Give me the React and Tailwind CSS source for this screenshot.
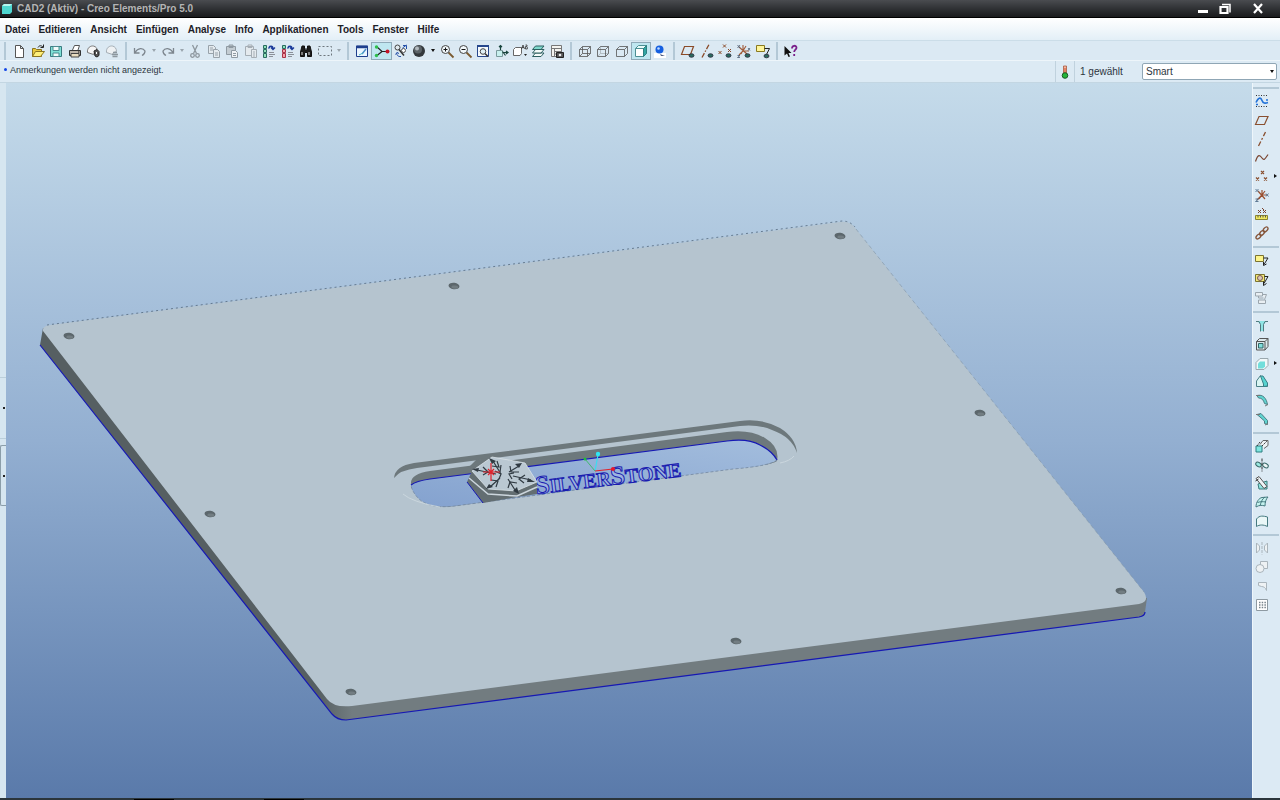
import React from 'react';

const icons = {
    new: <path d="M4.5 2.5h5l3 3v9h-8zM9.5 2.5v3h3" fill="#fff" stroke="#555" />,
    open: (
        <>
            <path d="M2.5 13.5v-8h3l1 1h5v7z" fill="#e9c93c" stroke="#8a7420" />
            <path d="M2.5 13.5l3-5h9l-4 5z" fill="#fff07a" stroke="#8a7420" />
            <path d="M8 4.5c1-2 3-2.5 5-.5M13.5 1.500v3h-3" fill="none" stroke="#222" />
        </>
    ),
    save: (
        <>
            <path d="M2.5 3.5h11v10h-11z" fill="#7fe0d6" stroke="#3a7a80" />
            <path d="M5 3.5h6v4H5zM5 10h6v3.500H5z" fill="#f2fbfb" stroke="#4a8a90" />
        </>
    ),
    print: (
        <>
            <path d="M5.5 7l2-4.500h5L11 7" fill="#fff" stroke="#555" />
            <path d="M2.5 7.5h11v5h-11z" fill="#bdb5aa" stroke="#333" />
            <path d="M4 10.5h8v3.500H4z" fill="#e8dcc0" stroke="#444" />
            <path d="M11 9h1.500" stroke="#111" />
        </>
    ),
    preview: (
        <>
            <path d="M2.5 9.5c-1-8 10-9 10-1l-3 1-1 2z" fill="#f5f5f5" stroke="#777" />
            <path d="M9 8l3-1.500 2 2v4l-2 1.500-2-1z" fill="#555" stroke="#222" />
            <path d="M11.5 9v2" stroke="#fff" />
        </>
    ),
    send: (
        <>
            <path d="M2.5 9.5c-1-8 10-9 10-1l-3 1-1 2z" fill="#eef1f3" stroke="#a5aeb5" />
            <path d="M8 11.5h6M8.5 13.5h5M9 9.5h4" stroke="#8d979e" strokeWidth="1.300" />
        </>
    ),
    undo: <path d="M2.5 5v5h5M3 9.5c3-5 8-5 10-1.500 0 2-1 3.500-3 4.500" fill="none" stroke="#7d868e" strokeWidth="1.300" />,
    redo: <path d="M13.5 5v5h-5M13 9.5c-3-5-8-5-10-1.500 0 2 1 3.500 3 4.500" fill="none" stroke="#7d868e" strokeWidth="1.300" />,
    cut: (
        <g fill="none" stroke="#8d979e" strokeWidth="1.300">
            <path d="M5.5 2l4 8.500M10.5 2l-4 8.500" />
            <circle cx="5.500" cy="12.500" r="1.800" />
            <circle cx="10.500" cy="12.500" r="1.800" />
        </g>
    ),
    copy: (
        <g fill="#e4eaee" stroke="#98a2aa">
            <path d="M2.5 2.5h5l2 2v6h-7zM4 5h3M4 7h3" />
            <path d="M7.5 6.5h4l2 2v6h-6zM9 10h3M9 12h3" />
        </g>
    ),
    paste: (
        <g fill="#c3ccd2" stroke="#8f9aa2">
            <path d="M2.5 3.5h9v8h-9zM5 2h4v2.500H5z" />
            <path d="M7.5 7.5h4l2 2v5h-6zM9 10.5h3M9 12.5h3" fill="#f0f3f5" />
        </g>
    ),
    pasteSpecial: (
        <g fill="#e4eaee" stroke="#a5aeb5">
            <path d="M2.5 3.5h8v9h-8zM5 2h4v2.500H5z" />
            <path d="M8.5 6.5h5v8h-5zM10 9h2M10 11h2M10 13h2" />
        </g>
    ),
    regen: (
        <>
            <path d="M2.5 2.5h3v3h-3zM2.5 6.5h3v3h-3zM2.5 10.5h3v4h-3z" fill="#8fe0b8" stroke="#286b60" />
            <path d="M8 5.5c0-3 4-3 4 0M10 4.5l2 2 2-2M9 3l-1.500 2.500" fill="none" stroke="#1a3a9a" strokeWidth="1.300" />
            <path d="M8 9.5h5M8 11.5h6M8 13.5h4" stroke="#8a9098" />
        </>
    ),
    regenManager: (
        <>
            <path d="M2.5 2.5h3v3h-3z" fill="#8fe0b8" stroke="#286b60" />
            <path d="M2.5 6.5h3v3h-3zM2.5 10.5h3v4h-3z" fill="#f4a0a8" stroke="#a83248" />
            <path d="M8 5.5c0-3 4-3 4 0M10 4.5l2 2 2-2M9 3l-1.500 2.500" fill="none" stroke="#1a3a9a" strokeWidth="1.300" />
            <path d="M8 9.5h5M8 11.5h6M8 13.5h4" stroke="#8a9098" />
        </>
    ),
    find: (
        <>
            <path d="M4 3h2.500v2H7v2h2V5h.5V3H12l1.500 6v4.500h-4V9.500h-3v4h-4V9z" fill="#1c1c1c" stroke="#111" />
            <path d="M4 9v3M11 9v3" stroke="#ddd" />
        </>
    ),
    selectBox: <path d="M1.5 3.5h13v9h-13z" fill="none" stroke="#6d767d" strokeDasharray="2 2" />,
    repaint: (
        <>
            <path d="M2.5 3h11v10.500h-11z" fill="#eaf6ff" stroke="#1d3e8c" />
            <path d="M2 4h12" stroke="#1d3e8c" strokeWidth="2.500" />
            <path d="M12 6l-4 5" stroke="#4a90c8" strokeWidth="1.500" />
            <path d="M5 12l4-2" stroke="#47b4c4" />
        </>
    ),
    spin: (
        <>
            <path d="M3 4l5 4.500h6M8 8.5l-5 4" fill="none" stroke="#222" strokeWidth="1.200" />
            <circle cx="2.500" cy="4" r="1.700" fill="#2cbf4a" />
            <circle cx="2.500" cy="12.500" r="1.700" fill="#2cbf4a" />
            <circle cx="13.500" cy="8.500" r="2" fill="#c41528" />
        </>
    ),
    orient: (
        <>
            <circle cx="4.500" cy="4.500" r="2.500" fill="#dfe8ee" stroke="#444" />
            <path d="M6 6.5l5 6" stroke="#333" strokeWidth="1.500" />
            <circle cx="10.500" cy="7.500" r="2" fill="#fff" stroke="#555" />
            <path d="M10 2.5h3.500V6M9.500 5l4-3M4 9.500c-1 2 1 4.500 4 4M6 10.5l-2-1-1.500 2" stroke="#244fa8" fill="none" />
        </>
    ),
    shadeBall: (
        <>
            <circle cx="8" cy="8" r="6" fill="#33383c" />
            <circle cx="7" cy="6.500" r="4" fill="#5c6368" />
            <circle cx="6" cy="5.500" r="2" fill="#b3babf" />
        </>
    ),
    zoomIn: (
        <>
            <path d="M9.5 9.5l5 5" stroke="#7a5a30" strokeWidth="1.800" />
            <circle cx="6.500" cy="6.500" r="4" fill="#f1f8fb" stroke="#444" />
            <path d="M4.5 6.5h4M6.5 4.5v4" stroke="#111" />
        </>
    ),
    zoomOut: (
        <>
            <path d="M9.5 9.5l5 5" stroke="#7a5a30" strokeWidth="1.800" />
            <circle cx="6.500" cy="6.500" r="4" fill="#f1f8fb" stroke="#444" />
            <path d="M4.5 6.5h4" stroke="#111" />
        </>
    ),
    refit: (
        <>
            <path d="M2.5 2.5h11v11h-11z" fill="#f4f9fc" stroke="#26478c" />
            <path d="M2 3h12" stroke="#26478c" strokeWidth="2" />
            <path d="M10 10.5l3 3" stroke="#333" strokeWidth="1.500" />
            <circle cx="8" cy="8.500" r="2.800" fill="#dff0f5" stroke="#444" />
        </>
    ),
    reorient: (
        <>
            <path d="M2.5 7.5h6v6h-6z" fill="#c8f0ee" stroke="#7a9a9c" />
            <path d="M6.5 7V2.500M5 4l1.500-1.500L8 4M8.5 9.5h5M12 8l2 1.500-2 1.500M8.5 8.5l3 4" stroke="#17443c" fill="none" strokeWidth="1.200" />
        </>
    ),
    viewList: (
        <>
            <path d="M1.5 6.5l2-2h6v6l-1.500 2H1.500z" fill="#fff" stroke="#666" />
            <path d="M9.5 6l1.500-4 1.500 4M10 4.5h2M13.5 2h1.500v1.500h-1.500V6h1.800V4" stroke="#333" fill="none" strokeWidth=".8" />
            <path d="M12 11h3l-1.500 2z" fill="#222" />
        </>
    ),
    layers: (
        <g stroke="#2c5f60">
            <path d="M2.5 13.5l3-3.500h8.500l-3 3.500z" fill="#f4fbfa" />
            <path d="M2.5 10l3-3.500h8.500l-3 3.500z" fill="#f4fbfa" />
            <path d="M2.5 6.5l3-3.500h8.500l-3 3.500z" fill="#7fd8cc" />
        </g>
    ),
    viewManager: (
        <>
            <path d="M2.5 2.5h10v11h-10zM2.5 5.5h10M5.5 5.5v8M5.5 8.5h7M5.5 11h7" fill="#f4f4f0" stroke="#777" />
            <path d="M7.5 9.5h7v5h-7z" fill="#555" stroke="#222" />
            <circle cx="11" cy="12" r="1.300" fill="#eee" />
        </>
    ),
    wireframe: <path d="M2.5 6.5h8v7h-8zM5.5 3.5h8v7h-8zM2.5 6.5l3-3M10.5 6.5l3-3M10.5 13.5l3-3M2.5 13.5l3-3" fill="none" stroke="#555" strokeWidth=".8" />,
    hiddenLine: (
        <g fill="none" strokeWidth=".8">
            <path d="M5.5 3.5v7h8M2.5 13.5l3-3" stroke="#a9b2b8" />
            <path d="M2.5 6.5h8v7h-8zM2.5 6.5l3-3h8v7l-3 3M10.5 6.5l3-3" stroke="#555" />
        </g>
    ),
    noHidden: <path d="M2.5 6.5h8v7h-8zM2.5 6.5l3-3h8v7l-3 3M10.5 6.5l3-3" fill="none" stroke="#555" strokeWidth=".8" />,
    shaded: (
        <>
            <path d="M2.5 5.5h8v8h-8z" fill="#fff" stroke="#4c8f94" />
            <path d="M2.5 5.5l3-3h8l-3 3z" fill="#e6fbfa" stroke="#4c8f94" />
            <path d="M10.5 5.5l3-3v8l-3 3z" fill="#31a5a2" stroke="#2c7f80" />
        </>
    ),
    enhanced: (
        <>
            <path d="M2 10h12v5H2z" fill="#fff" />
            <path d="M8 11l5 2H9z" fill="#4d5c80" />
            <circle cx="7.500" cy="6.500" r="4" fill="#155fe0" />
            <circle cx="6.500" cy="5.500" r="1.300" fill="#bcd8ff" />
        </>
    ),
    planeShow: (
        <>
            <path d="M1.5 11.5l3-8h9l-3 8z" fill="none" stroke="#8a4a28" strokeWidth="1.200" />
            <ellipse cx="11.500" cy="12.500" rx="2.500" ry="1.800" fill="#2b6b60" stroke="#223" strokeWidth=".8" />
        </>
    ),
    axisShow: (
        <>
            <path d="M3 14.5L10 1.500" stroke="#8a4a28" strokeWidth="1.300" strokeDasharray="5 1.500 1.500 1.500" />
            <ellipse cx="11.500" cy="12.500" rx="2.500" ry="1.800" fill="#2b6b60" stroke="#223" strokeWidth=".8" />
        </>
    ),
    pointShow: (
        <>
            <path d="M6 1.5l3 3m0-3l-3 3M1.5 8l3 3m0-3l-3 3M11 6l3 3m0-3l-3 3" stroke="#8a4a28" />
            <ellipse cx="11.500" cy="12.500" rx="2.500" ry="1.800" fill="#2b6b60" stroke="#223" strokeWidth=".8" />
        </>
    ),
    csysShow: (
        <>
            <path d="M7 8V2M7 8h6M7 8l-4 4M3 4l8 7M10 3l-5 8" stroke="#a05a38" strokeWidth="1.100" />
            <path d="M1.5 2l2.500 3m0-3L1.500 5M12 5l2 2.500M14 5l-2 2.500M1.5 12.5h2.500l-2.500 2h2.500" stroke="#4a5a70" fill="none" strokeWidth=".8" />
            <ellipse cx="11.500" cy="12.500" rx="2.500" ry="1.800" fill="#2b6b60" stroke="#223" strokeWidth=".8" />
        </>
    ),
    noteShow: (
        <>
            <path d="M1.5 2.5h8v6h-8z" fill="#fff59a" stroke="#8a7a20" />
            <path d="M9.5 5.5h5l-3 6" stroke="#222" fill="none" />
            <ellipse cx="11.500" cy="13" rx="2.500" ry="1.800" fill="#2b6b60" stroke="#223" strokeWidth=".8" />
        </>
    ),
    whatsThis: (
        <>
            <path d="M1.5 3v9.500l2.500-2 1.500 3.500 1.500-.5-1.500-3.500h3z" fill="#111" />
            <path d="M9 5.5c0-3.500 4.500-3.500 4.500-.8 0 2-2.300 2-2.300 4.300M11.2 11v2" stroke="#7a1f8a" fill="none" strokeWidth="1.800" />
        </>
    ),
    sketch: (
        <>
            <path d="M2 2.5h12M2 13.5h12" stroke="#333" strokeDasharray="1 1.500" />
            <path d="M2 9.5c3-6 5-5 6-2s3 3 6 2M2 11.5h2M12 7h2" fill="none" stroke="#2272d8" strokeWidth="1.600" />
        </>
    ),
    plane: <path d="M1.5 12.5l3.500-8h9l-3.500 8z" fill="none" stroke="#8a5030" strokeWidth="1.200" />,
    axis: <path d="M4.5 15L11.500 1" stroke="#8a5030" strokeWidth="1.300" strokeDasharray="5 2 2 2" />,
    curve: <path d="M1.5 11.5C4 3.500 6 5 8 8s3 1 6-3.500" fill="none" stroke="#7a4530" strokeWidth="1.200" />,
    points: <path d="M7 3l3 3m0-3L7 6M2 9.5l3 3m0-3l-3 3M10 9.5l3 3m0-3l-3 3" stroke="#8a5030" strokeWidth="1.200" />,
    csys: (
        <>
            <path d="M8 3v5l-5 5M8 8h5M4 4l7 8M11 4l-6 8" stroke="#9a5030" fill="none" strokeWidth="1.200" />
            <path d="M1.5 2l3 3m0-3l-3 3M12 6.5l2.500 3m0-3L12 9.500M1.5 12h3l-3 2.500h3" stroke="#52708c" fill="none" strokeWidth=".9" />
        </>
    ),
    analysis: (
        <>
            <path d="M4 4l3 3m0-3L4 7M9 4l3 3m0-3L9 7M8 2l2 2" stroke="#7a4530" />
            <path d="M1.5 9.5h12v4h-12z" fill="#f0e860" stroke="#8a8430" />
            <path d="M4 9.5v2M6.5 9.5v2M9 9.5v2M11.5 9.5v2" stroke="#555" />
        </>
    ),
    reference: (
        <g fill="none" stroke="#85553a" strokeWidth="1.300">
            <ellipse cx="4.500" cy="11.500" rx="3" ry="1.800" transform="rotate(-45 4.500 11.500)" />
            <ellipse cx="8" cy="8" rx="3" ry="1.800" transform="rotate(-45 8 8)" />
            <ellipse cx="11.500" cy="4.500" rx="3" ry="1.800" transform="rotate(-45 11.500 4.500)" />
        </g>
    ),
    note: (
        <>
            <path d="M1.5 3.5h8v6h-8z" fill="#fdf48a" stroke="#7c7430" />
            <path d="M9.5 6h4.500l-4 6.500M9.5 10v3.500l3-1.500" stroke="#222" fill="none" />
        </>
    ),
    noteSurface: (
        <>
            <path d="M1.5 3.5h9v7h-9z" fill="#f2e878" stroke="#7c7430" />
            <circle cx="6" cy="7" r="2.500" fill="#dcc8ba" stroke="#7a5a50" />
            <path d="M10.5 5.5h3.500l-4 7M9.5 10.5v4l3-2" stroke="#222" fill="none" />
        </>
    ),
    noteLinks: <path d="M1.5 2.5h7v3.500h-7zM4.5 10h7v3.500h-7zM8.5 4.5h4l-2 5M4.5 6v2h5" fill="#e9eff3" stroke="#9ba6ae" />,
    hole: (
        <>
            <path d="M3 4h10l-3 3v7H6V7z" fill="#8fe4e4" />
            <path d="M2 4.5h3l1.500 3v7M14 4.5h-3l-1.500 3v7" fill="none" stroke="#527a80" />
        </>
    ),
    shell: (
        <>
            <path d="M2.5 5.5l3-3h8.500v8l-3 3.500H2.500z" fill="#dce9ec" stroke="#555" />
            <path d="M2.5 5.5H11V14M11 5.5l3-3" fill="none" stroke="#555" />
            <path d="M4.5 7.5h4.500V12H4.500z" fill="#80dedb" stroke="#366" />
        </>
    ),
    rib: (
        <>
            <path d="M2 7.5l4-4h8v7l-4 4H2z" fill="#f1f8f9" stroke="#9aa8ae" />
            <path d="M4 8.5l2-2h5v5l-2 2H4z" fill="#72dedb" />
        </>
    ),
    draft: (
        <>
            <path d="M2.5 13.5V8l4-5.500 7 8.500v2.500z" fill="#d9f5f3" stroke="#4b7f86" />
            <path d="M6.5 3l3 8v2.500l4-.5V10L9 3z" fill="#57d4d0" stroke="#3b7f86" />
        </>
    ),
    round: (
        <>
            <path d="M3 3.5c6-1.500 9.500 3 10.500 9l-3-1C9.500 8 8 6 4.500 6z" fill="#60d4d0" stroke="#4b7f86" />
            <path d="M2 3.5h4M11 14l3-1.500" stroke="#777" />
        </>
    ),
    chamfer: (
        <>
            <path d="M3 3.5l4-1 6.500 7v4l-3-1V10L6 6z" fill="#60d4d0" stroke="#4b7f86" />
            <path d="M2 3.5h4M11 14l3-1.500" stroke="#777" />
        </>
    ),
    extrude: (
        <>
            <path d="M6 6.5l3-4h5v5l-4 3" fill="#eef3f5" stroke="#666" />
            <path d="M2 8h6v6H2z" fill="#7fe6e0" stroke="#2d7f80" />
            <path d="M3 8l3-4M8 8l5-5" stroke="#333" strokeDasharray="2 1" />
        </>
    ),
    revolve: (
        <>
            <ellipse cx="4.500" cy="7.500" rx="3" ry="2" transform="rotate(30 4.500 7.500)" fill="#9be8e0" stroke="#3a6a6a" />
            <ellipse cx="11.500" cy="8.500" rx="3" ry="2" transform="rotate(30 11.500 8.500)" fill="#eef5f5" stroke="#3a6a6a" />
            <path d="M8 1.5v13" stroke="#333" strokeDasharray="3 1" />
        </>
    ),
    sweep: (
        <>
            <path d="M4 9l9-3v8H5z" fill="#8fe4df" stroke="#3a7a7a" />
            <path d="M2 3.5l3-2 8 10-3 2z" fill="#eef3f5" stroke="#555" />
            <path d="M1.5 6l3-2" stroke="#333" />
        </>
    ),
    boundary: (
        <>
            <path d="M2 13c0-5 3-9 6-9.500L14 3c-2 2-3 5-3 9-3-1-6-1-9 1z" fill="#c4f2ee" stroke="#467a80" />
            <path d="M6 12c1-4 2-7 5-9M3.5 8.5c3-1 5-1 8.500-.5" fill="none" stroke="#467a80" />
        </>
    ),
    fill: <path d="M2.5 13.5V6c3-4 7-3 11-2v9.500c-4-2-8-2-11 0z" fill="#eaf7f7" stroke="#467a80" />,
    mirror: (
        <g fill="#eef2f4" stroke="#aab5bc">
            <path d="M2.5 3l3 3v4l-3 3zM13.5 3l-3 3v4l3 3z" />
            <path d="M8 2v12.500" strokeDasharray="3 1" />
        </g>
    ),
    merge: (
        <g fill="#eef2f4" stroke="#aab5bc">
            <path d="M6.5 2.5h7v7h-7z" />
            <circle cx="6" cy="9.500" r="4" />
        </g>
    ),
    trim: <path d="M4.5 4.5h8v8c-1-3-3-4-5-4l-3-1z" fill="#eef2f4" stroke="#aab5bc" />,
    pattern: (
        <>
            <path d="M2.5 2.5h11v11h-11z" fill="#fff" stroke="#8e9aa2" />
            <path d="M5 5.5h7M5 8h7M5 10.5h7" stroke="#77838b" strokeWidth="1.500" strokeDasharray="1.500 1.200" />
        </>
    ),
};

const menus = ['Datei', 'Editieren', 'Ansicht', 'Einfügen', 'Analyse', 'Info', 'Applikationen', 'Tools', 'Fenster', 'Hilfe'];

const topGroups = [
    { width: 'w-[111px]', items: ['new', 'open', 'save', 'print', 'preview', 'send'] },
    { width: 'w-[212px]', items: ['undo', 'caretOff', 'redo', 'caretOff', 'cut', 'copy', 'paste', 'pasteSpecial', 'regen', 'regenManager', 'find', 'selectBox', 'caretOff'] },
    { width: 'w-[213px]', items: ['repaint', 'spin', 'orient', 'shadeBall', 'caret', 'zoomIn', 'zoomOut', 'refit', 'reorient', 'viewList', 'layers', 'viewManager'] },
    { width: 'w-[93px]', items: ['wireframe', 'hiddenLine', 'noHidden', 'shaded', 'enhanced'] },
    { width: 'w-[93px]', items: ['planeShow', 'axisShow', 'pointShow', 'csysShow', 'noteShow'] },
    { width: 'w-[18px]', items: ['whatsThis'] },
];

const sideGroups = [
    { height: 'h-[150px]', items: ['sketch', 'plane', 'axis', 'curve', 'points', 'csys', 'analysis', 'reference'] },
    { height: 'h-[56px]', items: ['note', 'noteSurface', 'noteLinks'] },
    { height: 'h-[112px]', items: ['hole', 'shell', 'rib', 'draft', 'round', 'chamfer'] },
    { height: 'h-[93px]', items: ['extrude', 'revolve', 'sweep', 'boundary', 'fill'] },
    { height: 'h-[75px]', items: ['mirror', 'merge', 'trim', 'pattern'] },
];

const pressed = ['spin', 'shaded'];
const flyouts = ['points', 'rib'];

const holes = [
    [69, 336], [454, 286], [840, 236], [980, 413],
    [1121, 591], [736, 641], [351, 692], [210, 514],
];

const Icon = ({ name }) => (
    <svg viewBox="0 0 16 16" className="w-4 h-4 shrink-0" aria-hidden="true">{icons[name]}</svg>
);

const ToolButton = ({ name }) => {
    if (name === 'caret' || name === 'caretOff') {
        return (
            <button aria-label="Mehr" className="w-[9px] h-[18px] flex items-center justify-center">
                <svg viewBox="0 0 4 3" className="w-1 h-[3px]">
                    <path d="M0 0h4L2 3z" fill={name === 'caret' ? '#111' : '#9aa5ad'} />
                </svg>
            </button>
        );
    }
    return (
        <button
            aria-label={name}
            className={
                pressed.includes(name)
                    ? 'flex-1 h-[18px] flex items-center justify-center border border-[#8fa9b8] bg-[#bfe6f0]'
                    : 'flex-1 h-[18px] flex items-center justify-center'
            }
        >
            <Icon name={name} />
        </button>
    );
};

const TitleBar = () => (
    <header className="h-[18px] shrink-0 flex items-center pl-px pr-2 border-b border-black bg-linear-to-b from-[#4a4c50] via-[#303235] to-[#1a1b1d]">
        <svg viewBox="0 0 12 12" className="w-3 h-3">
            <path d="M1 3l2-2h8v8l-2 2H1z" fill="#4fd6d0" />
            <path d="M1 3l2-2h8L9 3z" fill="#b5f5f0" />
        </svg>
        <h1 className="ml-1 text-[10px] leading-4 font-bold text-[#b4b4b4]">CAD2 (Aktiv) - Creo Elements/Pro 5.0</h1>
        <div className="ml-auto flex items-center h-4">
            <button aria-label="Minimieren" className="w-[22px] flex justify-center">
                <svg viewBox="0 0 12 12" className="w-3 h-3"><path d="M1 7h10v3H1z" fill="#fff" /></svg>
            </button>
            <button aria-label="Wiederherstellen" className="w-[22px] flex justify-center">
                <svg viewBox="0 0 12 12" className="w-3 h-3">
                    <path d="M3 1.5h8v8" fill="none" stroke="#fff" strokeWidth="1.500" />
                    <path d="M1.500 4h7v6h-7z" fill="none" stroke="#fff" strokeWidth="2.200" />
                </svg>
            </button>
            <button aria-label="Schließen" className="ml-2 w-7 flex justify-center">
                <svg viewBox="0 0 12 12" className="w-3 h-3"><path d="M2 1l8 9M10 1l-8 9" stroke="#fff" strokeWidth="2.200" /></svg>
            </button>
        </div>
    </header>
);

const MenuBar = () => (
    <nav className="h-[22px] shrink-0 flex items-center gap-[9px] px-[5px] pt-[2px] bg-linear-to-b from-white to-[#e3eff7] text-[10px] leading-4 font-bold text-[#1d2128]">
        {menus.map((menu) => (
            <button key={menu}>{menu}</button>
        ))}
    </nav>
);

const TopToolbar = () => (
    <div className="h-5 shrink-0 flex items-center bg-[#dbe9f3] border-t border-[#cbdde8]">
        {topGroups.map((group) => (
            <React.Fragment key={group.items[0]}>
                <span className="w-[10px] flex justify-center">
                    <span className="w-[2px] h-[18px] bg-[#b3c8d6]" />
                </span>
                <div className={`flex items-center ${group.width}`}>
                    {group.items.map((name, i) => <ToolButton key={i} name={name} />)}
                </div>
            </React.Fragment>
        ))}
    </div>
);

const MessageBar = () => (
    <div className="h-[23px] shrink-0 flex items-stretch bg-[#dceaf4] border-t border-[#edf5fa] border-b border-b-[#c3d6e2] text-[10px] text-[#2c3540]">
        <p className="flex-1 flex items-start gap-[3px] pl-1 pt-[3px] text-[9px] leading-3">
            <span className="mt-1 w-[3px] h-[3px] rounded-full bg-blue-700" />
            Anmerkungen werden nicht angezeigt.
        </p>
        <div className="w-5 flex items-center justify-center border-x border-[#c0d2de]">
            <svg viewBox="0 0 10 14" className="w-[10px] h-[14px]">
                <path d="M3.5 1h3v8h-3z" fill="#f2b6a0" stroke="#a8583c" strokeWidth=".8" />
                <path d="M5 3v7" stroke="#d84a28" />
                <circle cx="5" cy="10.500" r="2.800" fill="#25b53a" stroke="#175c22" />
            </svg>
        </div>
        <label htmlFor="filter" className="w-[67px] pl-[5px] flex items-center">1 gewählt</label>
        <div className="relative w-[135px] mr-[3px] self-center">
            <select id="filter" className="block w-full h-[17px] pl-[3px] appearance-none bg-white border border-[#8fa6b5] rounded-xs text-[10px] leading-[15px] text-[#2c3540]">
                <option>Smart</option>
            </select>
            <svg viewBox="0 0 4 3" className="absolute right-[3px] top-[7px] w-1 h-[3px] pointer-events-none">
                <path d="M0 0h4L2 3z" fill="#111" />
            </svg>
        </div>
    </div>
);

const SashRail = () => (
    <div className="w-[6px] shrink-0 bg-[#d6e6f0] pt-[294px] flex flex-col">
        <div className="h-[62px] mb-[6px] flex items-center justify-end pr-px border-y border-[#bccfda]">
            <span className="w-[2px] h-[2px] bg-[#222]" />
        </div>
        <div className="h-[61px] flex items-center justify-end pr-px border border-r-0 border-[#8b9ea9] rounded-l-xs">
            <span className="w-[2px] h-[2px] bg-[#222]" />
        </div>
    </div>
);

const Snowflake = () => (
    <g fill="none" stroke="#303a42" strokeWidth="1.200">
        <path d="M501 474L493 461M509 472L519 466M496 474L477 470M513 476L531 480M500 478L490 487M508 479L515 490" />
        <path d="M497 461l2 6-7-1M510 466l1 6 8 0M483 467l5 5-5 3M525 475l-6 4 5 4M491 480l7 1-2 6M508 488l2-6 7 1M501 465l-1 7M495 471l6 3-2 5M514 473l-5 1 3 5" />
        <path d="M489 458l7 3-4 3zM522 463l-7 1 4 4zM472 469l7-1-1 4zM535 482l-7-4-1 4zM486 489l3-5 4 3zM519 494l-6-3 4-4z" fill="#303a42" stroke="none" />
    </g>
);

const Viewport = () => (
    <main className="flex-1 min-w-0 bg-linear-to-b from-[#c5dbea] via-[#93afd1] to-[#5a7aaa]">
        <svg viewBox="6 83 1246 715" className="w-full h-full" role="img" aria-label="CAD2">
            <defs>
                <linearGradient id="slot" x1="1" y1="0" x2="0" y2="1">
                    <stop offset="0" stopColor="#a3bddd" />
                    <stop offset="1" stopColor="#84a2cf" />
                </linearGradient>
                <linearGradient id="corner" gradientUnits="userSpaceOnUse" x1="318" y1="0" x2="352" y2="0">
                    <stop offset="0" stopColor="#565f62" />
                    <stop offset="1" stopColor="#727c80" />
                </linearGradient>
            </defs>

            {/* Plate */}
            <path d="M43 328L40 345 332 714Q337 720 346 720L1139 617Q1145 616 1145 612L1147 598 600 500z" fill="url(#corner)" />
            <path d="M43 331Q42 326 50 325L840 222Q850 220 856 229L1144 592Q1150 602 1139 604L352 706Q334 708 327 699z" fill="#b5c4cf" />
            <path d="M47 325L842 221Q850 221 855 227" fill="none" stroke="#54687c" strokeDasharray="2 3" strokeWidth=".8" />
            <path d="M40 345L332 714Q337 720 346 720L1139 617Q1145 616 1145 612" fill="none" stroke="#1618b4" strokeWidth="1.200" />
            <path d="M856 229L1144 592" stroke="#8093a6" strokeWidth=".6" strokeDasharray="4 3" />

            {holes.map(([cx, cy]) => (
                <g key={cx} transform={`rotate(8 ${cx} ${cy})`}>
                    <ellipse cx={cx} cy={cy} rx="5.500" ry="3.200" fill="#5c676c" />
                    <ellipse cx={cx + 1} cy={cy + 1} rx="3.500" ry="1.600" fill="#727d82" />
                </g>
            ))}

            {/* Recess wall */}
            <path d="M394 478Q395 466 414 463L740 421Q762 418 780 428 796 438 797 453Q792 437 772 430 758 424 740 426L417 468Q400 470 394 478z" fill="#6d787c" />
            {/* Slot */}
            <path d="M411 484Q410 474 430 471L727 432Q750 429 765 438 780 447 777 461 770 466 733 468L455 506Q430 509 419 498 411 490 411 484z" fill="#6d787c" />
            <path d="M411 485Q416 481 430 479L727 441Q748 438 760 445 772 451 777 460 770 466 733 469L455 506Q430 509 419 499 412 492 411 485z" fill="url(#slot)" />
            <path d="M411 485Q416 481 430 479L727 441Q748 438 760 445 772 451 777 460" fill="none" stroke="#1618b4" strokeWidth="1.200" />
            <path d="M777 460Q770 466 733 469L455 506Q430 509 419 499 412 492 411 485" fill="none" stroke="#7488a0" strokeDasharray="3 2" strokeWidth=".8" />
            <path d="M403 494Q412 502 440 507M780 463Q790 461 794 456" fill="none" stroke="#cfdae1" strokeWidth=".8" />

            <g transform="rotate(-7 538 493)" fontFamily="'Liberation Serif', serif" fontWeight="bold" fill="#9db4e0" stroke="#1a1cb0" strokeWidth="1">
                <text x="536" y="494" fontSize="20">
                    <tspan fontSize="26">S</tspan>ILVER<tspan fontSize="26">S</tspan>TONE
                </text>
            </g>

            {/* Hexagon badge */}
            <path d="M463 473L476 460 492 457 472 472z" fill="#6d787c" />
            <path d="M472 471L467 482 483 503 517 497 537 494 537 482 489 484z" fill="#636e72" />
            <path d="M467 482L483 503" stroke="#1618b4" />
            <path d="M469 478L488 494 517 496 537 487" fill="none" stroke="#ccd6dd" strokeWidth="1.500" />
            <path d="M472 471L492 457 525 463 537 482 516 491 488 489z" fill="#bac8d2" stroke="#dbe3e8" strokeWidth=".8" />
            <Snowflake />
            <path d="M491 463v18M483 472h17M488 469l6 6M494 469l-6 6" stroke="#e0222c" strokeWidth="1.200" />

            {/* Coordinate system */}
            <path d="M595 471L598 455" stroke="#35dff0" strokeWidth="1.200" />
            <path d="M595 471L585 459" stroke="#42b970" />
            <path d="M595 471L613 469" stroke="#e0222c" strokeWidth="1.200" />
            <circle cx="598" cy="454" r="2.200" fill="#2fe6f4" />
            <circle cx="585" cy="459" r="1.500" fill="#1fbf3a" />
            <circle cx="613" cy="469" r="2" fill="#e8182a" />
        </svg>
    </main>
);

const SideToolbar = () => (
    <aside className="w-7 shrink-0 bg-[#dceaf4] border-l border-[#eef6fb] pr-px">
        {sideGroups.map((group) => (
            <React.Fragment key={group.items[0]}>
                <div className="h-[9px] flex items-center">
                    <span className="w-full h-[2px] bg-[#b3c8d6]" />
                </div>
                <div className={`flex flex-col ${group.height}`}>
                    {group.items.map((name) => (
                        <button key={name} aria-label={name} className="flex-1 flex items-center gap-1 pl-px">
                            <Icon name={name} />
                            {flyouts.includes(name) && (
                                <svg viewBox="0 0 3 4" className="w-[3px] h-1"><path d="M0 0v4l3-2z" fill="#111" /></svg>
                            )}
                        </button>
                    ))}
                </div>
            </React.Fragment>
        ))}
    </aside>
);

const App = () => {
    return (
        <div className="h-screen flex flex-col overflow-hidden font-['Liberation_Sans',Arial,sans-serif]">
            <TitleBar />
            <MenuBar />
            <TopToolbar />
            <MessageBar />
            <div className="flex-1 min-h-0 flex">
                <SashRail />
                <Viewport />
                <SideToolbar />
            </div>
            <div className="h-[2px] shrink-0 flex items-end gap-[90px] pl-[134px] bg-[#2b353b]">
                <span className="w-10 h-px bg-black" />
                <span className="w-10 h-px bg-black" />
            </div>
        </div>
    );
};

export default App;
